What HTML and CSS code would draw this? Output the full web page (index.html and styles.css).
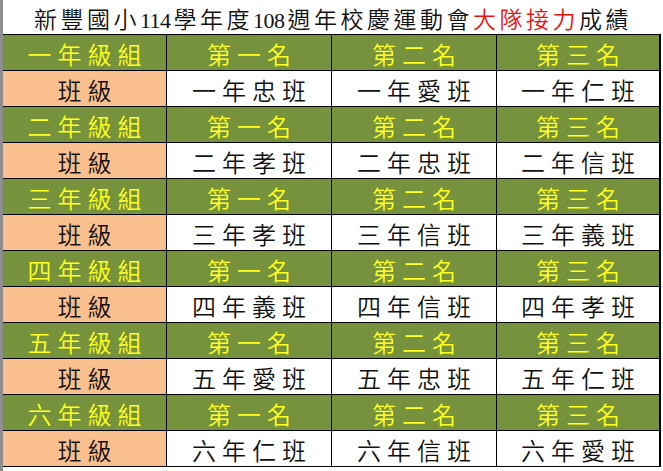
FILE: index.html
```html
<!DOCTYPE html>
<html lang="zh-Hant">
<head>
<meta charset="utf-8">
<title>新豐國小114學年度108週年校慶運動會大隊接力成績</title>
<link rel="stylesheet" href="styles.css">
</head>
<body>
<div class="sheet">
  <div class="title">新豐國小<span class="num">114</span>學年度<span class="num">108</span>週年校慶運動會<span class="red">大隊接力</span>成績</div>
  <div class="grid">
    <div class="cell head">一年級組</div><div class="cell head">第一名</div><div class="cell head">第二名</div><div class="cell head">第三名</div>
    <div class="cell label">班級</div><div class="cell val">一年忠班</div><div class="cell val">一年愛班</div><div class="cell val">一年仁班</div>
    <div class="cell head">二年級組</div><div class="cell head">第一名</div><div class="cell head">第二名</div><div class="cell head">第三名</div>
    <div class="cell label">班級</div><div class="cell val">二年孝班</div><div class="cell val">二年忠班</div><div class="cell val">二年信班</div>
    <div class="cell head">三年級組</div><div class="cell head">第一名</div><div class="cell head">第二名</div><div class="cell head">第三名</div>
    <div class="cell label">班級</div><div class="cell val">三年孝班</div><div class="cell val">三年信班</div><div class="cell val">三年義班</div>
    <div class="cell head">四年級組</div><div class="cell head">第一名</div><div class="cell head">第二名</div><div class="cell head">第三名</div>
    <div class="cell label">班級</div><div class="cell val">四年義班</div><div class="cell val">四年信班</div><div class="cell val">四年孝班</div>
    <div class="cell head">五年級組</div><div class="cell head">第一名</div><div class="cell head">第二名</div><div class="cell head">第三名</div>
    <div class="cell label">班級</div><div class="cell val">五年愛班</div><div class="cell val">五年忠班</div><div class="cell val">五年仁班</div>
    <div class="cell head">六年級組</div><div class="cell head">第一名</div><div class="cell head">第二名</div><div class="cell head">第三名</div>
    <div class="cell label">班級</div><div class="cell val">六年仁班</div><div class="cell val">六年信班</div><div class="cell val">六年愛班</div>
  </div>
</div>
</body>
</html>
```
FILE: styles.css
```css
html, body {
  margin: 0;
  padding: 0;
  background: #ffffff;
}
body {
  font-family: "Noto Sans CJK TC", "Noto Sans CJK SC", sans-serif;
  font-weight: 350;
  width: 663px;
  height: 471px;
  overflow: hidden;
}
.sheet {
  border-left: 3px solid #8e8e8e;
  width: 660px;
  height: 471px;
  box-sizing: border-box;
}
.title {
  height: 34px;
  line-height: 34px;
  text-align: center;
  font-size: 23px;
  letter-spacing: 3.5px;
  color: #111111;
  padding-left: 3px;
  padding-top: 1px;
  box-sizing: border-box;
  white-space: nowrap;
}
.title .num {
  font-family: "Liberation Serif", serif;
  font-weight: 400;
  font-size: 22px;
  letter-spacing: -0.5px;
  margin-right: 3px;
}
.red {
  color: #ee1111;
}
.grid {
  display: grid;
  grid-template-columns: 163px 164px 164px 162px;
  grid-auto-rows: 35px;
  gap: 1px;
  background: #000000;
  border-top: 1px solid #000000;
  border-right: 2px solid #000000;
  border-bottom: 1px solid #000000;
  width: 658px;
  box-sizing: border-box;
}
.cell {
  display: flex;
  align-items: center;
  justify-content: center;
  font-size: 24px;
  letter-spacing: 6px;
  padding-left: 6px;
  padding-top: 3px;
  box-sizing: border-box;
  white-space: nowrap;
  line-height: 1;
}
.head {
  background: #76923c;
  color: #ffff22;
}
.label {
  background: #fabf8f;
  color: #111111;
}
.val {
  background: #ffffff;
  color: #111111;
}
```
